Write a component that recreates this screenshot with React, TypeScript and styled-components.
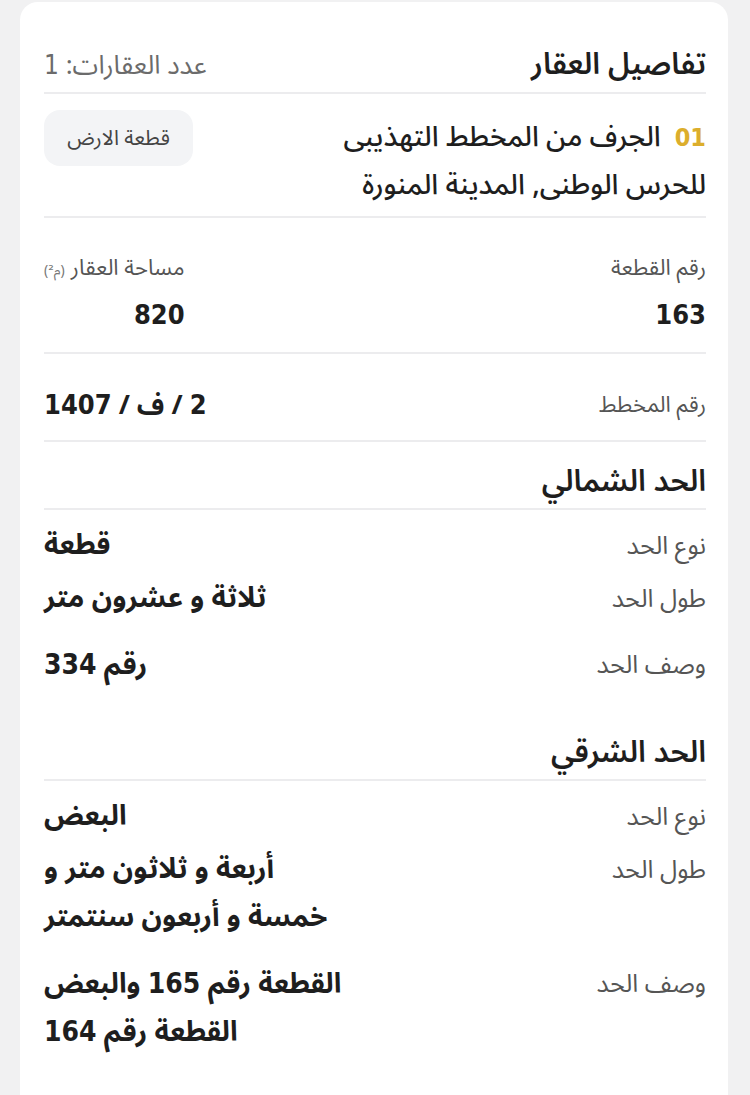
import React from "react";
import styled, { createGlobalStyle } from "styled-components";

const Global = createGlobalStyle`
  html, body { margin: 0; padding: 0; background: #f1f1f2; }
  body { font-family: "Noto Sans Arabic", "Noto Kufi Arabic", "DejaVu Sans", sans-serif; color: #1f1f1f; }
  * { box-sizing: border-box; }
`;

const Page = styled.div`
  padding: 2px 22px 0 20px;
  min-height: 1095px;
`;

const Card = styled.div`
  direction: rtl;
  background: #ffffff;
  border-radius: 18px;
  padding: 0 22px 60px 24px;
  min-height: 1120px;
`;

const Header = styled.div`
  display: flex;
  justify-content: space-between;
  align-items: center;
  height: 92px;
  padding-top: 46px;
  padding-bottom: 10px;
  border-bottom: 2px solid #ececee;
`;

const Title = styled.h1`
  margin: 0;
  height: 36px;
  font-size: 30px;
  line-height: 36px;
  font-weight: 600;
  color: #1e1e1e;
`;

const Count = styled.span`
  height: 36px;
  font-size: 26px;
  line-height: 36px;
  color: #6b6b6b;
  font-weight: 400;
`;

const Num = styled.span<{ $light?: boolean }>`
  font-family: "DejaVu Sans Condensed", "DejaVu Sans", sans-serif;
  font-weight: ${(p) => (p.$light ? 300 : 700)};
`;

const PlotRow = styled.div`
  display: flex;
  justify-content: space-between;
  align-items: flex-start;
  height: 124px;
  padding-top: 20px;
  border-bottom: 2px solid #ececee;
`;

const PlotName = styled.div`
  font-size: 28px;
  line-height: 48px;
  font-weight: 500;
  color: #1e1e1e;
`;

const NameLine = styled.div`
  height: 48px;
  white-space: nowrap;
`;

const Index = styled.span`
  font-family: "DejaVu Sans Condensed", "DejaVu Sans", sans-serif;
  color: #dcae2c;
  font-size: 25px;
  font-weight: 600;
  margin-left: 14px;
`;

const Badge = styled.span`
  margin-top: -4px;
  width: 149px;
  height: 56px;
  border-radius: 16px;
  background: #f3f4f6;
  display: flex;
  align-items: center;
  justify-content: center;
  font-size: 21px;
  color: #444;
`;

const InfoRow = styled.div<{ $height: number; $top: number }>`
  display: flex;
  justify-content: space-between;
  align-items: flex-start;
  height: ${(p) => p.$height}px;
  padding-top: ${(p) => p.$top}px;
  border-bottom: 2px solid #ececee;
`;

const Field = styled.div`
  display: flex;
  flex-direction: column;
  gap: 18px;
`;

const Label = styled.span<{ $offset?: number }>`
  display: block;
  height: 26px;
  margin-top: ${(p) => p.$offset ?? 0}px;
  font-size: 22px;
  line-height: 26px;
  color: #555;
  white-space: nowrap;
`;

const Unit = styled.span`
  font-size: 14px;
  color: #777;
  margin-right: 6px;
`;

const Value = styled.span`
  display: block;
  height: 32px;
  font-size: 27px;
  line-height: 32px;
  font-weight: 700;
  color: #1e1e1e;
  white-space: nowrap;
`;

const Section = styled.section<{ $gap: number }>`
  margin-top: ${(p) => p.$gap}px;
`;

const SectionHeading = styled.h2`
  margin: 0;
  height: 46px;
  font-size: 30px;
  line-height: 36px;
  font-weight: 600;
  color: #1e1e1e;
  border-bottom: 2px solid #ececee;
`;

const Rows = styled.div`
  padding-top: 12px;
`;

const BoundRow = styled.div<{ $gap: number }>`
  display: flex;
  justify-content: space-between;
  align-items: flex-start;
  margin-top: ${(p) => p.$gap}px;
`;

const BoundLabel = styled.span`
  display: block;
  height: 48px;
  font-size: 25px;
  line-height: 48px;
  color: #555;
`;

const BoundValue = styled.div`
  font-size: 28px;
  font-weight: 700;
  color: #1e1e1e;
  text-align: left;
`;

const ValueLine = styled.div`
  height: 48px;
  line-height: 48px;
  white-space: nowrap;
`;

function withNums(s: string) {
  return s.split(/(\d+)/).map((part, i) =>
    /^\d+$/.test(part) ? <Num key={i}>{part}</Num> : <React.Fragment key={i}>{part}</React.Fragment>
  );
}

type Bound = { label: string; lines: string[]; gap: number };

const north: Bound[] = [
  { label: "نوع الحد", lines: ["قطعة"], gap: 0 },
  { label: "طول الحد", lines: ["ثلاثة و عشرون متر"], gap: 5 },
  { label: "وصف الحد", lines: ["رقم 334"], gap: 18 },
];

const east: Bound[] = [
  { label: "نوع الحد", lines: ["البعض"], gap: 0 },
  { label: "طول الحد", lines: ["أربعة و ثلاثون متر و", "خمسة و أربعون سنتمتر"], gap: 5 },
  { label: "وصف الحد", lines: ["القطعة رقم 165 والبعض", "القطعة رقم 164"], gap: 18 },
];

function BoundarySection({ title, rows, gap }: { title: string; rows: Bound[]; gap: number }) {
  return (
    <Section $gap={gap}>
      <SectionHeading>{title}</SectionHeading>
      <Rows>
        {rows.map((r) => (
          <BoundRow key={r.label} $gap={r.gap}>
            <BoundLabel>{r.label}</BoundLabel>
            <BoundValue>
              {r.lines.map((l, i) => (
                <ValueLine key={i}>{withNums(l)}</ValueLine>
              ))}
            </BoundValue>
          </BoundRow>
        ))}
      </Rows>
    </Section>
  );
}

export default function App() {
  return (
    <>
      <Global />
      <Page>
        <Card>
          <Header>
            <Title>تفاصيل العقار</Title>
            <Count>
              عدد العقارات: <Num $light>1</Num>
            </Count>
          </Header>
          <PlotRow>
            <PlotName>
              <NameLine>
                <Index>01</Index>
                الجرف من المخطط التهذيبى
              </NameLine>
              <NameLine>للحرس الوطنى, المدينة المنورة</NameLine>
            </PlotName>
            <Badge>قطعة الارض</Badge>
          </PlotRow>
          <InfoRow $height={136} $top={37}>
            <Field>
              <Label>رقم القطعة</Label>
              <Value>
                <Num>163</Num>
              </Value>
            </Field>
            <Field>
              <Label>
                مساحة العقار<Unit>(م²)</Unit>
              </Label>
              <Value>
                <Num>820</Num>
              </Value>
            </Field>
          </InfoRow>
          <InfoRow $height={88} $top={35}>
            <Label $offset={3}>رقم المخطط</Label>
            <Value>{withNums("2 / ف / 1407")}</Value>
          </InfoRow>
          <BoundarySection title="الحد الشمالي" rows={north} gap={22} />
          <BoundarySection title="الحد الشرقي" rows={east} gap={46} />
        </Card>
      </Page>
    </>
  );
}
